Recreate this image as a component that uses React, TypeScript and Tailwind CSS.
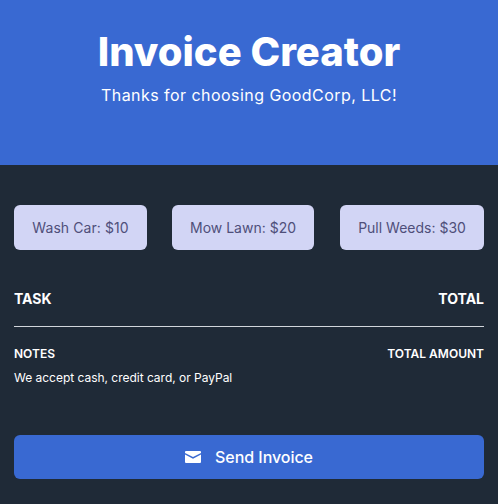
const tasks = ["Wash Car: $10", "Mow Lawn: $20", "Pull Weeds: $30"];

export default function App() {
  return (
    <div className="flex h-[504px] w-[498px] flex-col overflow-hidden bg-[#1f2a37] font-['Inter',sans-serif] text-white">
      <header className="h-[165px] bg-[#3969d2] pt-[26px] text-center">
        <h1 className="text-[40px] leading-[52px] font-extrabold">Invoice Creator</h1>
        <p className="mt-[5px] text-base leading-6 tracking-[0.45px]">Thanks for choosing GoodCorp, LLC!</p>
      </header>
      <main className="flex flex-1 flex-col px-[14px] pt-10">
        <div className="grid grid-cols-[133px_142px_144px] gap-x-[25.5px]">
          {tasks.map((task) => (
            <button key={task} className="h-[45px] rounded-md bg-[#d2d5f5] text-sm text-[#4f4f7a] first:tracking-[0.08px] nth-2:-ml-[0.5px] nth-2:mr-[0.5px]">
              {task}
            </button>
          ))}
        </div>
        <div className="mt-[39px] flex h-[38px] justify-between border-b border-[#d1d5db] text-sm font-bold">
          <span>TASK</span>
          <span>TOTAL</span>
        </div>
        <div className="mt-[18px] flex justify-between text-xs leading-[18px] font-semibold">
          <span>NOTES</span>
          <span>TOTAL AMOUNT</span>
        </div>
        <p className="mt-[6px] text-xs leading-[18px] tracking-[-0.02px]">We accept cash, credit card, or PayPal</p>
        <button className="mt-[48px] flex h-11 items-center justify-center gap-[14px] rounded-md bg-[#3969d2] text-base font-medium tracking-[-0.05px]">
          <svg width="16" height="12" viewBox="0 0 16 12" fill="currentColor">
            <path d="M1 0h14a1 1 0 0 1 1 1v.9L8 6.1 0 1.9V1a1 1 0 0 1 1-1z" />
            <path d="M0 3.6l8 4.2 8-4.2V11a1 1 0 0 1-1 1H1a1 1 0 0 1-1-1z" />
          </svg>
          Send Invoice
        </button>
      </main>
    </div>
  );
}
